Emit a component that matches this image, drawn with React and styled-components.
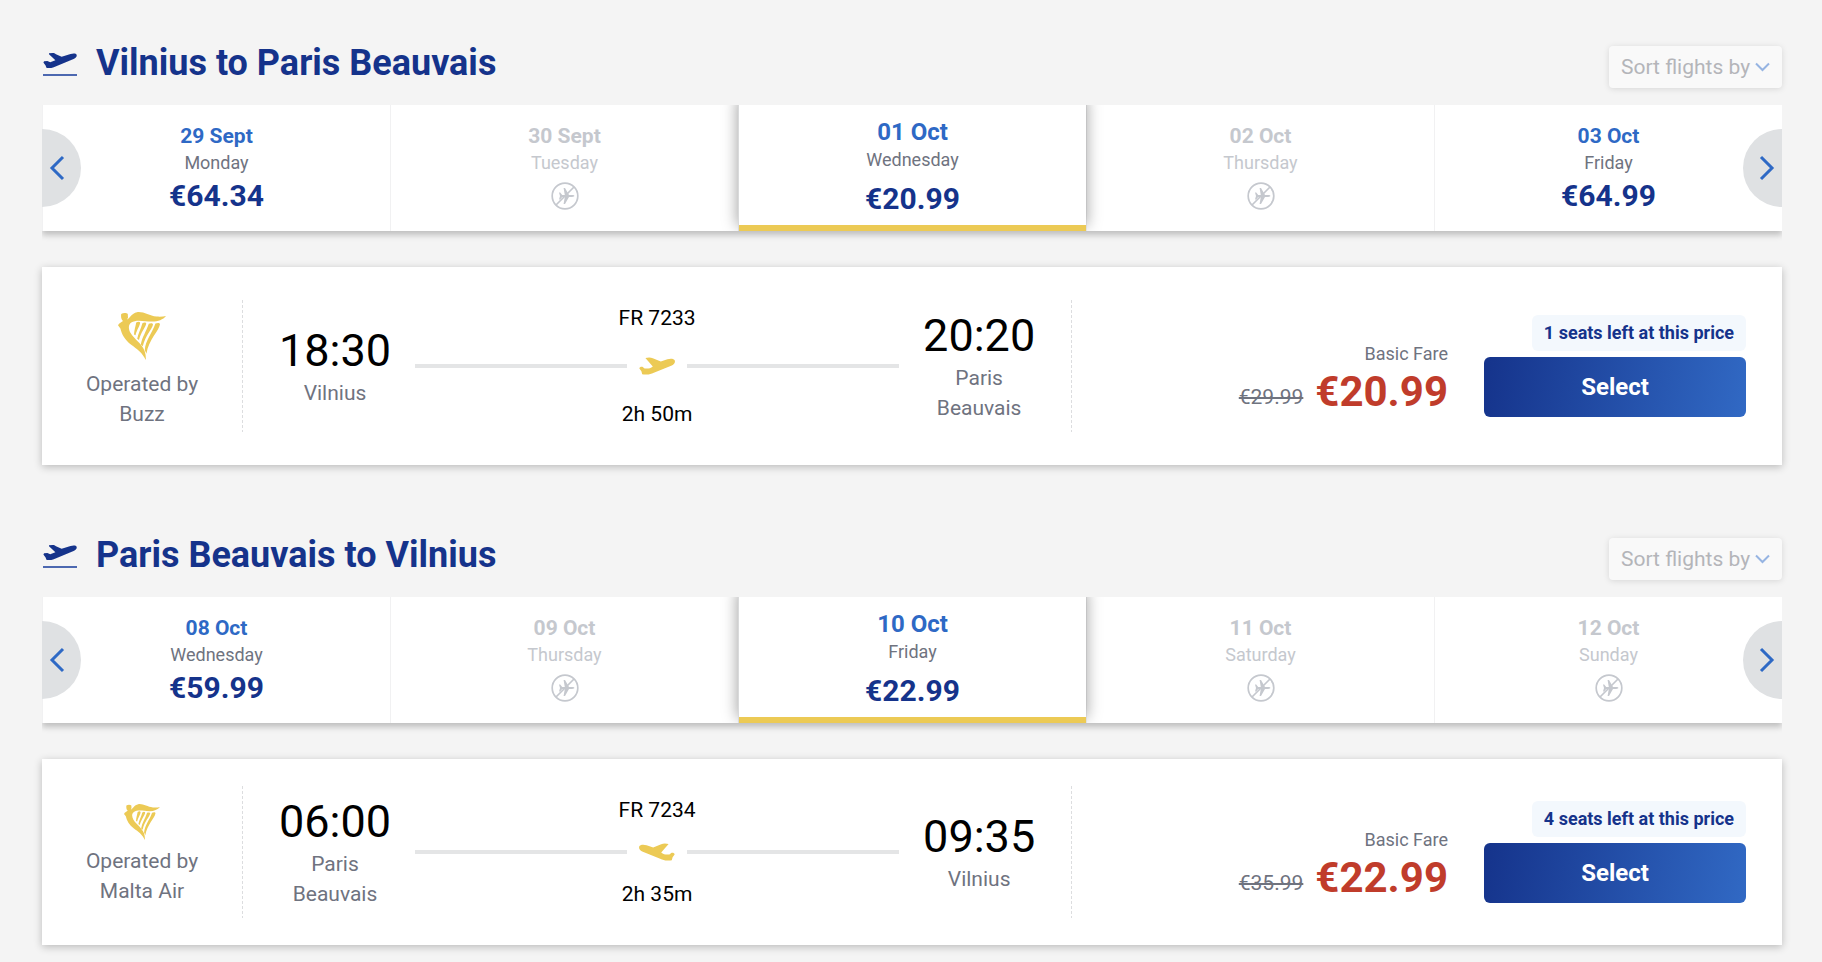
import React from "react";
import styled, { createGlobalStyle } from "styled-components";

const GlobalStyle = createGlobalStyle`
  * {
    box-sizing: border-box;
  }

  body {
    margin: 0;
    background-color: #f4f4f4;
    font-family: Roboto, "Liberation Sans", sans-serif;
  }

  button,
  select {
    font-family: inherit;
  }
`;

const Page = styled.main`
  display: flex;
  flex-direction: column;
  gap: 63px;
  padding: 36px 40px 17px 42px;
`;

const Header = styled.header`
  display: flex;
  justify-content: space-between;
  align-items: flex-end;
  margin-bottom: 17px;
`;

const Heading = styled.div`
  display: flex;
  align-items: center;
  gap: 18px;
  padding-top: 2px;
`;

const Title = styled.h2`
  margin: 0;
  font-size: 36px;
  font-weight: 700;
  line-height: 50px;
  color: #15338b;
`;

const SortBox = styled.div`
  position: relative;
  display: flex;
  border-radius: 4px;
  background-color: #f9f9f9;
  box-shadow: 0 1px 6px rgba(0, 0, 0, 0.12);
`;

const SortSelect = styled.select`
  appearance: none;
  height: 42px;
  padding: 0 31px 0 12px;
  border: none;
  background: transparent;
  font-size: 21px;
  color: #b4b5b9;
  cursor: pointer;
`;

const SortIcon = styled.svg`
  position: absolute;
  top: 16px;
  right: 12px;
  pointer-events: none;
`;

const Carousel = styled.div`
  position: relative;
  margin-bottom: 36px;
  box-shadow: 0 4px 6px rgba(0, 0, 0, 0.22);
  clip-path: inset(0 0 -12px 0);
`;

const Days = styled.ul`
  display: grid;
  grid-template-columns: repeat(5, 1fr);
  margin: 0;
  padding: 0;
  list-style: none;
  overflow: hidden;
`;

const Day = styled.li`
  display: flex;
  position: relative;
  z-index: ${(props) => (props.$selected ? 1 : 0)};
  border-left: 1px solid ${(props) => (props.$selected ? "#d9dadb" : "#f1f1f2")};
  background-color: #fff;
  box-shadow: ${(props) => (props.$selected ? "0 -6px 14px 1px rgba(0, 0, 0, 0.35)" : "none")};
`;

const DayButton = styled.button`
  display: flex;
  flex: 1;
  flex-direction: column;
  align-items: center;
  height: 126px;
  padding: ${(props) => (props.$selected ? "14px 0 0" : "18px 0 0")};
  border: none;
  border-bottom: ${(props) => (props.$selected ? "6px solid #ecca55" : "none")};
  background: transparent;
  cursor: pointer;
`;

const DayDate = styled.span`
  font-size: ${(props) => (props.$selected ? "24px" : "21px")};
  font-weight: 700;
  line-height: ${(props) => (props.$selected ? "27px" : "26px")};
  color: ${(props) => (props.$disabled ? "#c5c8ce" : "#2e69c5")};
`;

const DayName = styled.span`
  font-size: 18px;
  line-height: 27px;
  color: ${(props) => (props.$disabled ? "#c5c8ce" : "#6f737f")};
`;

const DayPrice = styled.span`
  margin-top: ${(props) => (props.$selected ? "6px" : "0")};
  font-size: 30px;
  font-weight: 700;
  line-height: 39px;
  color: #15338b;
`;

const NoFlight = styled.svg`
  margin-top: 6px;
`;

const ArrowButton = styled.button`
  position: absolute;
  top: 24px;
  ${(props) => (props.$side === "left" ? "left: 0" : "right: 0")};
  z-index: 2;
  display: flex;
  align-items: center;
  justify-content: center;
  width: 39px;
  height: 78px;
  padding: ${(props) => (props.$side === "left" ? "0 9px 0 0" : "0 0 0 9px")};
  border: none;
  border-radius: ${(props) => (props.$side === "left" ? "0 39px 39px 0" : "39px 0 0 39px")};
  background-color: #dfe1e3;
  cursor: pointer;
`;

const Card = styled.article`
  display: grid;
  grid-template-columns: 200px 1px 7fr 1px 6fr;
  padding: 36px 0;
  background-color: #fff;
  box-shadow: 0 2px 8px rgba(0, 0, 0, 0.24);
`;

const Operator = styled.div`
  display: flex;
  flex-direction: column;
  align-items: center;
  padding-bottom: ${(props) => (props.$compact ? "3px" : "0")};
  font-size: 21px;
  line-height: 30px;
  color: #6f737f;
`;

const Harp = styled.svg`
  width: ${(props) => (props.$compact ? "36px" : "48px")};
  height: ${(props) => (props.$compact ? "36px" : "48px")};
  margin: 9px 0 ${(props) => (props.$compact ? "6px" : "9px")};
`;

const Divider = styled.div`
  align-self: center;
  height: 132px;
  margin: -9px 0;
  background: repeating-linear-gradient(#dcdddf 0 3px, transparent 3px 5px);
`;

const Journey = styled.div`
  display: flex;
  gap: 24px;
  padding: 0 36px;
`;

const Stop = styled.div`
  display: flex;
  flex-direction: column;
  align-items: center;
  align-self: center;
  width: 112px;
`;

const Time = styled.time`
  font-size: 45px;
  line-height: 54px;
  color: #000;
`;

const City = styled.span`
  font-size: 21px;
  line-height: 30px;
  text-align: center;
  color: #6f737f;
`;

const FlightInfo = styled.div`
  display: flex;
  flex: 1;
  flex-direction: column;
  align-items: center;
  justify-content: space-between;
  font-size: 21px;
  line-height: 30px;
  color: #000;
`;

const Route = styled.div`
  display: flex;
  align-items: center;
  align-self: stretch;
  gap: 12px;
`;

const RouteLine = styled.span`
  flex: 1;
  height: 4px;
  background-color: #e4e5e6;
`;

const Fare = styled.div`
  display: flex;
  align-items: center;
  justify-content: flex-end;
  gap: 36px;
  padding-right: 36px;
`;

const Prices = styled.div`
  display: flex;
  flex-direction: column;
  align-items: flex-end;
  padding-top: 28px;
`;

const FareName = styled.span`
  font-size: 18px;
  line-height: 24px;
  color: #6f737f;
`;

const PriceRow = styled.div`
  display: flex;
  align-items: flex-end;
  gap: 12px;
`;

const OldPrice = styled.s`
  font-size: 21px;
  line-height: 42px;
  color: #6f737f;
`;

const Price = styled.strong`
  font-size: 42px;
  font-weight: 700;
  line-height: 52px;
  color: #c03c2b;
`;

const Action = styled.div`
  display: flex;
  flex-direction: column;
  align-items: flex-end;
  gap: 6px;
  width: 262px;
`;

const SeatsBadge = styled.span`
  padding: 0 12px;
  border-radius: 6px;
  background-color: #f3f8fd;
  font-size: 18px;
  font-weight: 700;
  line-height: 36px;
  color: #15338b;
`;

const SelectButton = styled.button`
  width: 100%;
  height: 60px;
  border: none;
  border-radius: 6px;
  background: linear-gradient(100deg, #15338b, #3169c4);
  font-size: 24px;
  font-weight: 700;
  color: #fff;
  cursor: pointer;
`;

const TakeoffIcon = () => (
  <svg width="36" height="30" viewBox="0 0 36 30" aria-hidden="true">
    <path
      d="M7 5.2L10.6 4.9C12 4.9 13 5.4 14 6.2L19.6 8.8L28.6 6C31.5 5.1 34.2 5.4 34.7 6.9C35.1 8.5 33.6 10.1 31.6 11.1L11.8 19.2C9.2 20.1 6.4 20.2 4.4 19.8L3.6 17.4L1.4 14.6L2.1 13.3L5.4 13L8.2 14.3L13.4 12.2L7 6.2Z"
      fill="#15338b"
    />
    <path d="M1 27h34" stroke="#4c68b0" strokeWidth="2" />
  </svg>
);

const PlaneIcon = ({ landing }) => (
  <svg width="36" height="18" viewBox="0 0 36 18" aria-hidden="true">
    <path
      d="M6.4 1C9 .3 11.8.2 13.8 1.3L21.8 4.6L28.4 2.3C31.6 1.2 35 1.6 35.8 3.6C36.4 5.4 35 7.4 32.8 8.5L13 16.4C9.4 17.7 5.6 17.8 3.2 17.2L2.4 14.2L.4 11.6C.2 10.3 1.6 9.6 3.4 9.8L5.6 11.4C8.6 11.9 11.4 11.4 13.8 9.4Z"
      fill="#ecca55"
      transform={landing ? "matrix(-1 0 0 1 36 0)" : undefined}
    />
  </svg>
);

const NoFlightIcon = () => (
  <NoFlight width="28" height="28" viewBox="0 0 28 28" role="img" aria-label="No flights">
    <g fill="none" stroke="#c5c8ce" strokeWidth="1.7">
      <circle cx="14" cy="14" r="12.8" />
      <path d="M5 23L23 5" />
    </g>
    <path
      d="M8 10.5h1.2l2 2.6h2.6L12.6 6h1.4l4 7.1h3c1.6 0 2.4.5 2.4.9s-.8.9-2.4.9h-3L14 22h-1.4l1.2-7.1h-2.6l-2 2.6H8l1-3.5z"
      fill="#c5c8ce"
    />
  </NoFlight>
);

const HarpIcon = ({ compact }) => (
  <Harp $compact={compact} viewBox="0 0 48 48" fill="#ecca55" aria-hidden="true">
    <path d="M3.2 2C5 .8 8.6 .8 9.8 2L10 5.8L9 7.4C12 6.4 13.4 1.2 19 .2C26 -.6 31 4 38.6 4.6C42.4 4.9 45.6 4.6 48 4C45 7.8 39.4 9.8 33.6 9.6C26.4 9.4 18.4 7 13.2 10.6C10 13 10.4 17.2 12.6 21C16.2 27.2 23.8 31.4 26.6 39C27.6 41.8 28 44.8 27.8 48C24.4 40.8 19 37 13.2 32.8C7 28 3.6 22 2.4 16.4L0 13.2C1 10.8 3.8 10.2 5 9C3.2 7.4 2.8 5 3.2 2Z" />
    <path d="M18.2 10.6C19.8 9.6 21.6 9.4 22.1 10.6C22.3 13.2 19 17.6 17.5 23.2L16 22.6C16.2 18.4 17.4 15 18.2 10.6Z" />
    <path d="M24.4 11.2C26 10.2 28 10.2 28.2 11.6C27.8 15 22.8 20.6 21 28L19.2 26.8C20.2 21.6 22.8 17.2 24.4 11.2Z" />
    <path d="M30.8 11.8C32.6 10.8 34.8 11 35 12.4C34.4 16.6 27.2 23.4 24.8 34.2L22.8 32.6C24 25.4 28.2 19.6 30.8 11.8Z" />
    <path d="M37.4 11.6C39.4 10.6 41.8 10.6 42 12.2C41 19 30.8 27 28.4 41.8L26.8 38C27.4 28.6 34.6 20.4 37.4 11.6Z" />
  </Harp>
);

const Chevron = ({ direction }) => (
  <svg width="16" height="26" viewBox="0 0 16 26" aria-hidden="true">
    <path
      d={direction === "left" ? "M14 2L3 13L14 24" : "M2 2L13 13L2 24"}
      fill="none"
      stroke="#2e69c5"
      strokeWidth="3"
    />
  </svg>
);

const trips = [
  {
    id: "outbound",
    title: "Vilnius to Paris Beauvais",
    days: [
      { date: "29 Sept", name: "Monday", price: "€64.34" },
      { date: "30 Sept", name: "Tuesday" },
      { date: "01 Oct", name: "Wednesday", price: "€20.99", selected: true },
      { date: "02 Oct", name: "Thursday" },
      { date: "03 Oct", name: "Friday", price: "€64.99" }
    ],
    flight: {
      operator: "Buzz",
      number: "FR 7233",
      duration: "2h 50m",
      departure: "18:30",
      from: ["Vilnius"],
      arrival: "20:20",
      to: ["Paris", "Beauvais"],
      oldPrice: "€29.99",
      price: "€20.99",
      seats: 1
    }
  },
  {
    id: "inbound",
    title: "Paris Beauvais to Vilnius",
    inbound: true,
    days: [
      { date: "08 Oct", name: "Wednesday", price: "€59.99" },
      { date: "09 Oct", name: "Thursday" },
      { date: "10 Oct", name: "Friday", price: "€22.99", selected: true },
      { date: "11 Oct", name: "Saturday" },
      { date: "12 Oct", name: "Sunday" }
    ],
    flight: {
      operator: "Malta Air",
      number: "FR 7234",
      duration: "2h 35m",
      departure: "06:00",
      from: ["Paris", "Beauvais"],
      arrival: "09:35",
      to: ["Vilnius"],
      oldPrice: "€35.99",
      price: "€22.99",
      seats: 4
    }
  }
];

const DateCarousel = ({ days }) => (
  <Carousel>
    <ArrowButton type="button" $side="left" aria-label="Previous dates">
      <Chevron direction="left" />
    </ArrowButton>
    <Days>
      {days.map(({ date, name, price, selected }) => (
        <Day key={date} $selected={selected}>
          <DayButton type="button" disabled={!price} $selected={selected}>
            <DayDate $selected={selected} $disabled={!price}>{date}</DayDate>
            <DayName $disabled={!price}>{name}</DayName>
            {price ? <DayPrice $selected={selected}>{price}</DayPrice> : <NoFlightIcon />}
          </DayButton>
        </Day>
      ))}
    </Days>
    <ArrowButton type="button" $side="right" aria-label="Next dates">
      <Chevron direction="right" />
    </ArrowButton>
  </Carousel>
);

const FlightStop = ({ time, city }) => (
  <Stop>
    <Time>{time}</Time>
    {city.map((line) => (
      <City key={line}>{line}</City>
    ))}
  </Stop>
);

const FlightCard = ({ flight, inbound }) => (
  <Card>
    <Operator $compact={inbound}>
      <HarpIcon compact={inbound} />
      <span>Operated by</span>
      <span>{flight.operator}</span>
    </Operator>
    <Divider />
    <Journey>
      <FlightStop time={flight.departure} city={flight.from} />
      <FlightInfo>
        <span>{flight.number}</span>
        <Route>
          <RouteLine />
          <PlaneIcon landing={inbound} />
          <RouteLine />
        </Route>
        <span>{flight.duration}</span>
      </FlightInfo>
      <FlightStop time={flight.arrival} city={flight.to} />
    </Journey>
    <Divider />
    <Fare>
      <Prices>
        <FareName>Basic Fare</FareName>
        <PriceRow>
          <OldPrice>{flight.oldPrice}</OldPrice>
          <Price>{flight.price}</Price>
        </PriceRow>
      </Prices>
      <Action>
        <SeatsBadge>{flight.seats} seats left at this price</SeatsBadge>
        <SelectButton type="button">Select</SelectButton>
      </Action>
    </Fare>
  </Card>
);

const App = () => {
  return (
    <>
      <GlobalStyle />
      <Page>
        {trips.map((trip) => (
          <section key={trip.id}>
            <Header>
              <Heading>
                <TakeoffIcon />
                <Title>{trip.title}</Title>
              </Heading>
              <SortBox>
                <SortSelect aria-label="Sort flights by" defaultValue="">
                  <option value="">Sort flights by</option>
                </SortSelect>
                <SortIcon width="15" height="10" viewBox="0 0 15 10" aria-hidden="true">
                  <path d="M1 1.5L7.5 8L14 1.5" fill="none" stroke="#96b4e2" strokeWidth="2" />
                </SortIcon>
              </SortBox>
            </Header>
            <DateCarousel days={trip.days} />
            <FlightCard flight={trip.flight} inbound={trip.inbound} />
          </section>
        ))}
      </Page>
    </>
  );
};

export default App;
